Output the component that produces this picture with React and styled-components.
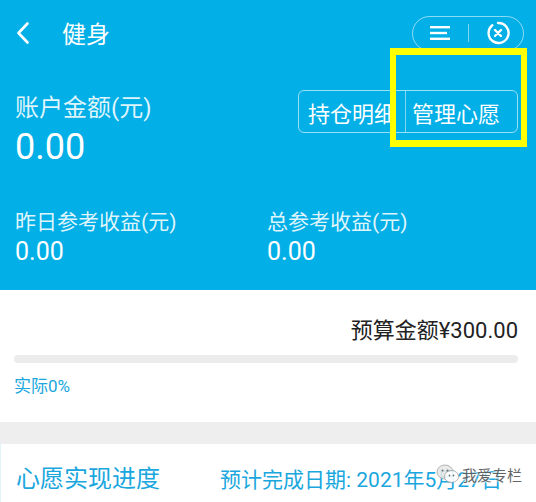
import React from "react";
import styled, { createGlobalStyle } from "styled-components";

const BLUE = "#02afe7";
const TEXT_BLUE = "#1aa7de";
const FONT = `"Roboto", "Noto Sans CJK SC", sans-serif`;

const Global = createGlobalStyle`
  html, body { margin: 0; padding: 0; background: #fff; }
  body { font-family: ${FONT}; width: 536px; height: 502px; overflow: hidden; }
  * { box-sizing: border-box; }
`;

const Page = styled.div`
  position: relative;
  width: 536px;
  height: 502px;
  overflow: hidden;
  background: #fff;
`;

const Header = styled.div`
  background: ${BLUE};
  color: #fff;
  padding-bottom: 23px;
`;

const NavBar = styled.div`
  height: 66px;
  display: flex;
  align-items: center;
  padding: 0 12px 0 15px;
`;

const BackBtn = styled.div`
  width: 47px;
  height: 24px;
  display: flex;
  align-items: center;
`;

const Title = styled.div`
  font-size: 24px;
  line-height: 28px;
  margin-top: 3px;
`;

const Capsule = styled.div`
  margin-left: auto;
  width: 112px;
  height: 35px;
  border: 1px solid rgba(255, 255, 255, 0.55);
  border-radius: 18px;
  display: flex;
  align-items: center;
  justify-content: space-between;
  padding: 0 13px 0 16px;
`;

const CapDivider = styled.div`
  width: 1px;
  height: 18px;
  background: rgba(255, 255, 255, 0.5);
`;

const AccountRow = styled.div`
  display: flex;
  justify-content: space-between;
  align-items: flex-start;
  padding: 24px 18px 0 15px;
`;

const Label = styled.div`
  font-size: ${(p) => p.$size || 21}px;
  line-height: ${(p) => (p.$size || 21) + 4}px;
  margin-top: ${(p) => p.$mt || 0}px;
  color: rgba(255, 255, 255, 0.88);
  white-space: nowrap;
`;

const Amount = styled.div`
  font-size: ${(p) => p.$size}px;
  line-height: ${(p) => p.$lh}px;
  margin-top: ${(p) => p.$mt || 0}px;
  color: #fff;
`;

const SegGroup = styled.div`
  display: flex;
  height: 43px;
  border: 1px solid rgba(255, 255, 255, 0.6);
  border-radius: 6px;
  overflow: hidden;
`;

const Segment = styled.div`
  width: ${(p) => p.$w}px;
  display: flex;
  align-items: center;
  padding-left: ${(p) => p.$pl}px;
  font-size: 22px;
  color: #fff;
  white-space: nowrap;
  overflow: hidden;
  & + & {
    border-left: 1px solid rgba(255, 255, 255, 0.5);
  }
`;

const StatsRow = styled.div`
  display: grid;
  grid-template-columns: 252px 1fr;
  padding: 41px 15px 0 15px;
`;

const Stat = styled.div`
  display: flex;
  flex-direction: column;
  gap: 2px;
`;

const Budget = styled.div`
  padding: 28px 18px 26px 14px;
`;

const BudgetAmount = styled.div`
  text-align: right;
  font-size: 22px;
  line-height: 25px;
  color: #222;
`;

const Track = styled.div`
  margin-top: 12px;
  height: 8px;
  border-radius: 4px;
  background: #ececec;
  overflow: hidden;
`;

const Fill = styled.div`
  height: 100%;
  background: ${TEXT_BLUE};
`;

const Actual = styled.div`
  margin-top: 13px;
  font-size: 17px;
  line-height: 20px;
  color: ${TEXT_BLUE};
`;

const Gap = styled.div`
  height: 22px;
  background: #eeeeee;
`;

const ProgressHead = styled.div`
  display: flex;
  align-items: flex-start;
  gap: 60px;
  padding: 20px 0 0 15px;
  border-left: 1px solid #e3f2f8;
  height: 61px;
`;

const SectionTitle = styled.div`
  font-size: 24px;
  line-height: 30px;
  color: ${TEXT_BLUE};
`;

const DateText = styled.div`
  font-size: 21px;
  line-height: 30px;
  margin-top: 1px;
  color: ${TEXT_BLUE};
  white-space: nowrap;
`;

const Highlight = styled.div`
  position: absolute;
  left: 390px;
  top: 48px;
  width: 137px;
  height: 99px;
  border: 7px solid #ffff00;
  border-left-width: 6px;
  border-right-width: 6px;
  pointer-events: none;
`;

const Watermark = styled.div`
  position: absolute;
  left: 436px;
  top: 463px;
  display: flex;
  align-items: center;
  gap: 2px;
  font-size: 15px;
  color: #555;
  text-shadow: 0 0 2px #fff, 0 0 2px #fff, 0 0 3px #fff;
  opacity: 0.9;
`;

const Chevron = () => (
  <svg width="16" height="24" viewBox="0 0 16 24">
    <path d="M12.5 2.5 L3.5 12 L12.5 21.5" fill="none" stroke="#fff" strokeWidth="2.6" strokeLinecap="round" strokeLinejoin="round" />
  </svg>
);

const MenuIcon = () => (
  <svg width="22" height="16" viewBox="0 0 22 16">
    <rect x="1" y="1" width="20" height="2.4" fill="#fff" />
    <rect x="1" y="6.8" width="17" height="2.4" fill="#fff" />
    <rect x="1" y="12.6" width="20" height="2.4" fill="#fff" />
  </svg>
);

const CloseIcon = () => (
  <svg width="24" height="24" viewBox="0 0 24 24">
    <path d="M6.3 4.2 A10 10 0 1 0 12 2" fill="none" stroke="#fff" strokeWidth="2.4" strokeLinecap="round" />
    <path d="M9 9 L15 15 M15 9 L9 15" stroke="#fff" strokeWidth="2.4" strokeLinecap="round" />
  </svg>
);

const WeChatLogo = () => (
  <svg width="24" height="22" viewBox="0 0 24 22">
    <ellipse cx="9" cy="9" rx="8" ry="7" fill="#e8e8e8" stroke="#999" strokeWidth="0.8" />
    <ellipse cx="15.5" cy="13.5" rx="7" ry="6" fill="#fff" stroke="#999" strokeWidth="0.8" />
    <circle cx="6.5" cy="7.5" r="1" fill="#666" />
    <circle cx="11.5" cy="7.5" r="1" fill="#666" />
    <circle cx="13.5" cy="12.5" r="0.9" fill="#666" />
    <circle cx="17.5" cy="12.5" r="0.9" fill="#666" />
  </svg>
);

export default function App() {
  const progress = 0;
  return (
    <Page>
      <Global />
      <Header>
        <NavBar>
          <BackBtn>
            <Chevron />
          </BackBtn>
          <Title>健身</Title>
          <Capsule>
            <MenuIcon />
            <CapDivider />
            <CloseIcon />
          </Capsule>
        </NavBar>
        <AccountRow>
          <div>
            <Label $size={24} $mt={4}>账户金额(元)</Label>
            <Amount $size={36} $lh={44} $mt={3}>0.00</Amount>
          </div>
          <SegGroup>
            <Segment $w={106} $pl={9}>持仓明细</Segment>
            <Segment $w={112} $pl={6}>管理心愿</Segment>
          </SegGroup>
        </AccountRow>
        <StatsRow>
          <Stat>
            <Label $size={21}>昨日参考收益(元)</Label>
            <Amount $size={25} $lh={30}>0.00</Amount>
          </Stat>
          <Stat>
            <Label $size={21}>总参考收益(元)</Label>
            <Amount $size={25} $lh={30}>0.00</Amount>
          </Stat>
        </StatsRow>
      </Header>
      <Budget>
        <BudgetAmount>预算金额¥300.00</BudgetAmount>
        <Track>
          <Fill style={{ width: `${progress}%` }} />
        </Track>
        <Actual>实际{progress}%</Actual>
      </Budget>
      <Gap />
      <ProgressHead>
        <SectionTitle>心愿实现进度</SectionTitle>
        <DateText>预计完成日期: 2021年5月27日</DateText>
      </ProgressHead>
      <Highlight />
      <Watermark>
        <WeChatLogo />
        <span>我爱专栏</span>
      </Watermark>
    </Page>
  );
}
